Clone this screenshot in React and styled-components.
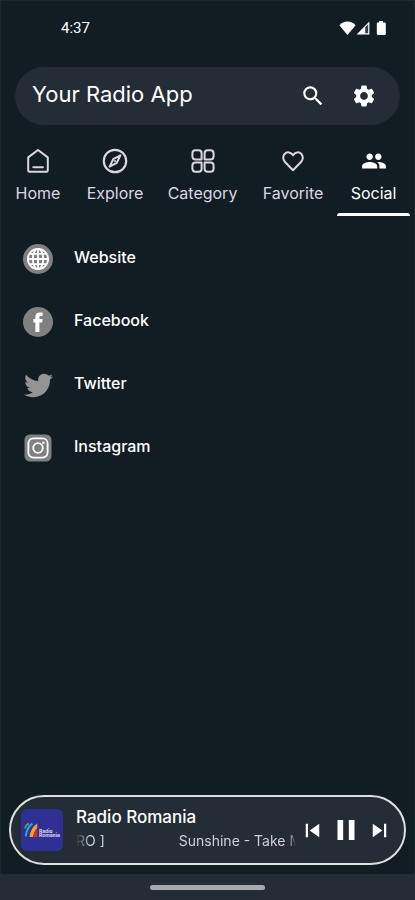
import React, { useState } from 'react';
import styled, { createGlobalStyle } from 'styled-components';
import { MdSearch, MdSettings, MdPeople, MdSkipPrevious, MdSkipNext, MdPause } from 'react-icons/md';
import { FaTwitter } from 'react-icons/fa';

const GlobalStyle = createGlobalStyle`
  * {
    box-sizing: border-box;
  }

  body {
    margin: 0;
    background: #111d23;
    color: #fff;
    font-family: Inter, 'Open Sans', sans-serif;
  }

  button {
    margin: 0;
    padding: 0;
    border: 0;
    background: none;
    color: inherit;
    font: inherit;
    cursor: pointer;
  }

  svg {
    display: block;
    flex: none;
  }
`;

const Screen = styled.div`
  min-height: 100vh;
  display: flex;
  flex-direction: column;
  box-shadow: inset 1px 1px 0 #1c292f, inset -1px 0 0 #1c292f;
`;

const StatusBar = styled.div`
  display: flex;
  justify-content: space-between;
  align-items: center;
  padding: 16px 28px 0 61px;
  font-family: Roboto, sans-serif;
  font-size: 15px;
  line-height: 24px;
`;

const StatusIcons = styled.div`
  display: flex;
  align-items: center;
`;

const AppBar = styled.header`
  display: flex;
  align-items: center;
  min-height: 58px;
  margin: 27px 15px 0;
  padding: 0 23px 0 17px;
  border-radius: 29px;
  background: #242d35;
`;

const Title = styled.h1`
  flex: 1;
  margin: 0;
  padding-bottom: 4px;
  font-size: 22px;
  font-weight: 400;
  line-height: 32px;
`;

const AppBarButton = styled.button`
  margin-left: 25px;
`;

const Tabs = styled.nav`
  display: grid;
  grid-template-columns: 72fr 82fr 93fr 88fr 73fr;
  margin-top: 20px;
  padding: 0 5px 0 2px;
`;

const Tab = styled.button`
  display: flex;
  flex-direction: column;
  align-items: center;
  color: ${(props) => (props.$active ? '#fff' : '#ddd5e1')};
  font-size: 16px;
  line-height: 20px;
  white-space: nowrap;

  svg {
    margin: 3px 0 9px;
  }

  &::after {
    content: '';
    align-self: stretch;
    height: 3px;
    margin-top: 10px;
    border-radius: 3px 3px 0 0;
    background: ${(props) => (props.$active ? '#fff' : 'transparent')};
  }
`;

const LinkList = styled.ul`
  flex: 1;
  margin: 0;
  padding: 19px 22px;
  list-style: none;
`;

const SocialLink = styled.a`
  display: flex;
  align-items: center;
  gap: 20px;
  padding: 8px 0;
  margin-bottom: 15px;
  color: #fff;
  font-size: 16px;
  font-weight: 500;
  line-height: 24px;
  text-decoration: none;

  span {
    padding-bottom: 4px;
  }
`;

const IconSlot = styled.div`
  display: flex;
  justify-content: center;
  align-items: center;
  width: 32px;
  height: 32px;
  color: #949494;
`;

const Disc = styled.div`
  display: flex;
  justify-content: center;
  align-items: center;
  width: 30px;
  height: 30px;
  border-radius: 50%;
  background: #808080;
  color: #fff;
`;

const Player = styled.section`
  display: flex;
  align-items: center;
  min-height: 70px;
  margin: 0 9px 9px;
  padding: 0 10px;
  border: 2px solid #dedfdf;
  border-radius: 35px;
  background: #242d35;
`;

const TrackInfo = styled.div`
  flex: 1;
  min-width: 0;
  margin: 0 3px 0 13px;
`;

const StationName = styled.div`
  font-size: 17px;
  font-weight: 500;
  line-height: 22px;
`;

const Marquee = styled.div`
  display: flex;
  gap: 74px;
  margin: 3px 0 4px;
  overflow: hidden;
  color: #d3ccd8;
  font-size: 14px;
  line-height: 20px;
  white-space: nowrap;
  mask-image: linear-gradient(to right, transparent, #000 14px, #000 calc(100% - 8px), transparent);
`;

const Controls = styled.div`
  display: flex;
  align-items: center;
  gap: 3px;
  margin-right: 1px;
`;

const GestureBar = styled.footer`
  display: flex;
  justify-content: center;
  align-items: center;
  height: 26px;
  background: #242d35;

  &::before {
    content: '';
    width: 115px;
    height: 5px;
    border-radius: 3px;
    background: #a7abad;
  }
`;

const lineProps = {
  width: 26,
  height: 26,
  viewBox: '0 0 26 26',
  fill: 'none',
  stroke: 'currentColor',
  strokeWidth: 2,
  strokeLinejoin: 'round',
  strokeLinecap: 'round',
};

const HomeIcon = () => (
  <svg {...lineProps}>
    <path d="M13 2 3.2 9.4V22.4q0 1.4 1.4 1.4H21.4q1.4 0 1.4-1.4V9.4Z" />
    <path d="M8.3 19.2h9.6" />
  </svg>
);

const CompassIcon = () => (
  <svg {...lineProps}>
    <circle cx="13" cy="13" r="11.2" strokeWidth="2.2" />
    <path d="M18.4 7.4 14.8 14.8 7.6 18.6 11.2 11.2Z" strokeWidth="2" />
    <circle cx="13" cy="13" r="1.1" fill="currentColor" stroke="none" />
  </svg>
);

const CategoryIcon = () => (
  <svg {...lineProps}>
    <path d="M5.6 2.2H8.6Q11.6 2.2 11.6 5.2V11.4H5.6Q2.4 11.4 2.4 8.2V5.4Q2.4 2.2 5.6 2.2Z" />
    <path d="M17.6 2.2H20.4Q23.6 2.2 23.6 5.4V8.2Q23.6 11.4 20.4 11.4H14.6V5.2Q14.6 2.2 17.6 2.2Z" />
    <path d="M5.6 14.4H11.6V20.8Q11.6 23.8 8.6 23.8H5.6Q2.4 23.8 2.4 20.6V17.6Q2.4 14.4 5.6 14.4Z" />
    <path d="M14.6 14.4H20.4Q23.6 14.4 23.6 17.6V20.6Q23.6 23.8 20.4 23.8H17.6Q14.6 23.8 14.6 20.8Z" />
  </svg>
);

const HeartIcon = () => (
  <svg {...lineProps}>
    <path d="M13 22.2 5 14C2.6 11.5 2.7 8 4.6 6 7 3.4 11 4 13 7.2 15 4 19 3.4 21.4 6 23.3 8 23.4 11.5 21 14Z" />
  </svg>
);

const GlobeIcon = () => (
  <svg width="22" height="22" viewBox="0 0 22 22" fill="none" stroke="currentColor" strokeWidth="1.8">
    <circle cx="11" cy="11" r="10.1" />
    <ellipse cx="11" cy="11" rx="5.2" ry="10.1" />
    <path d="M11 1V21M1 11H21M2.8 5.8H19.2M2.8 16.2H19.2" />
  </svg>
);

const FacebookIcon = () => (
  <svg width="10" height="20" viewBox="0 0 10 20" fill="currentColor">
    <path d="M2.4 20V10.6H.4V7H2.4V4.8Q2.4.4 6.6.4H9.6V4H7.8Q6.4 4 6.4 5.4V7H9.6L9.2 10.6H6.4V20Z" />
  </svg>
);

const InstagramIcon = () => (
  <svg width="28" height="28" viewBox="0 0 28 28" fill="none" stroke="#fff" strokeWidth="1.8">
    <rect x="0.5" y="0.5" width="27" height="27" rx="5.5" fill="#808080" stroke="none" />
    <rect x="4.4" y="4.4" width="19.2" height="19.2" rx="5" />
    <circle cx="14" cy="14" r="4.8" />
    <circle cx="19.4" cy="8.8" r="1.3" fill="#fff" stroke="none" />
  </svg>
);

const WifiIcon = () => (
  <svg width="17" height="14" viewBox="0 0 17 14" fill="#fff">
    <path d="M8.5 14 .4 4.3Q3.8.6 8.5.6T16.6 4.3Z" />
  </svg>
);

const SignalIcon = () => (
  <svg width="14" height="14" viewBox="0 0 14 14">
    <path d="M13.4.6V13.4H.6Z" fill="#fff" />
    <path d="M9.2 6.2 12.2 3.2V12.2H9.2Z" fill="#33404a" />
  </svg>
);

const BatteryIcon = () => (
  <svg width="17" height="14" viewBox="0 0 17 14" fill="#fff">
    <path d="M9 0h4v1.4h1.6q1.2 0 1.2 1.2V12.8q0 1.2-1.2 1.2H8Q6.8 14 6.8 12.8V2.6Q6.8 1.4 8 1.4H9Z" />
  </svg>
);

const StationLogo = () => (
  <svg width="42" height="42" viewBox="0 0 42 42" role="img" aria-label="Radio România">
    <rect width="42" height="42" rx="6" fill="#302f93" />
    <g fill="none">
      <path d="M4 19.5Q5 15.4 8 14.6" stroke="#4fae4f" strokeWidth="1.7" />
      <path d="M4.8 27.5Q6 18 11.4 14.6" stroke="#27a7e0" strokeWidth="2" />
    </g>
    <path d="M8.4 28Q10 18.5 16.2 14.6V19Q13 22 12 28Z" fill="#f5a51f" />
    <path d="M12.2 28Q13 22.5 16.2 19.2V28Z" fill="#e52a2d" />
    <g fill="#e6e6f5" fontFamily="Inter, sans-serif" fontSize="5" fontWeight="600">
      <text x="18" y="23.6">Radio</text>
      <text x="18" y="28">România</text>
    </g>
  </svg>
);

const tabs = [
  { name: 'Home', icon: <HomeIcon /> },
  { name: 'Explore', icon: <CompassIcon /> },
  { name: 'Category', icon: <CategoryIcon /> },
  { name: 'Favorite', icon: <HeartIcon /> },
  { name: 'Social', icon: <MdPeople size={26} /> },
];

const links = [
  { name: 'Website', icon: <Disc><GlobeIcon /></Disc> },
  { name: 'Facebook', icon: <Disc><FacebookIcon /></Disc> },
  { name: 'Twitter', icon: <FaTwitter size={29} /> },
  { name: 'Instagram', icon: <InstagramIcon /> },
];

const App = () => {
  const [active, setActive] = useState('Social');

  return (
    <Screen>
      <GlobalStyle />
      <StatusBar>
        <span>4:37</span>
        <StatusIcons>
          <WifiIcon />
          <SignalIcon />
          <BatteryIcon />
        </StatusIcons>
      </StatusBar>
      <AppBar>
        <Title>Your Radio App</Title>
        <AppBarButton aria-label="Search"><MdSearch size={26} /></AppBarButton>
        <AppBarButton aria-label="Settings"><MdSettings size={26} /></AppBarButton>
      </AppBar>
      <Tabs>
        {tabs.map((tab) => (
          <Tab key={tab.name} $active={tab.name === active} onClick={() => setActive(tab.name)}>
            {tab.icon}
            {tab.name}
          </Tab>
        ))}
      </Tabs>
      <LinkList>
        {links.map((link) => (
          <li key={link.name}>
            <SocialLink href={`#${link.name.toLowerCase()}`}>
              <IconSlot>{link.icon}</IconSlot>
              <span>{link.name}</span>
            </SocialLink>
          </li>
        ))}
      </LinkList>
      <Player>
        <StationLogo />
        <TrackInfo>
          <StationName>Radio Romania</StationName>
          <Marquee>
            <span>RO ]</span>
            <span>Sunshine - Take M</span>
          </Marquee>
        </TrackInfo>
        <Controls>
          <button aria-label="Previous"><MdSkipPrevious size={27} /></button>
          <button aria-label="Pause"><MdPause size={34} /></button>
          <button aria-label="Next"><MdSkipNext size={27} /></button>
        </Controls>
      </Player>
      <GestureBar />
    </Screen>
  );
};

export default App;
